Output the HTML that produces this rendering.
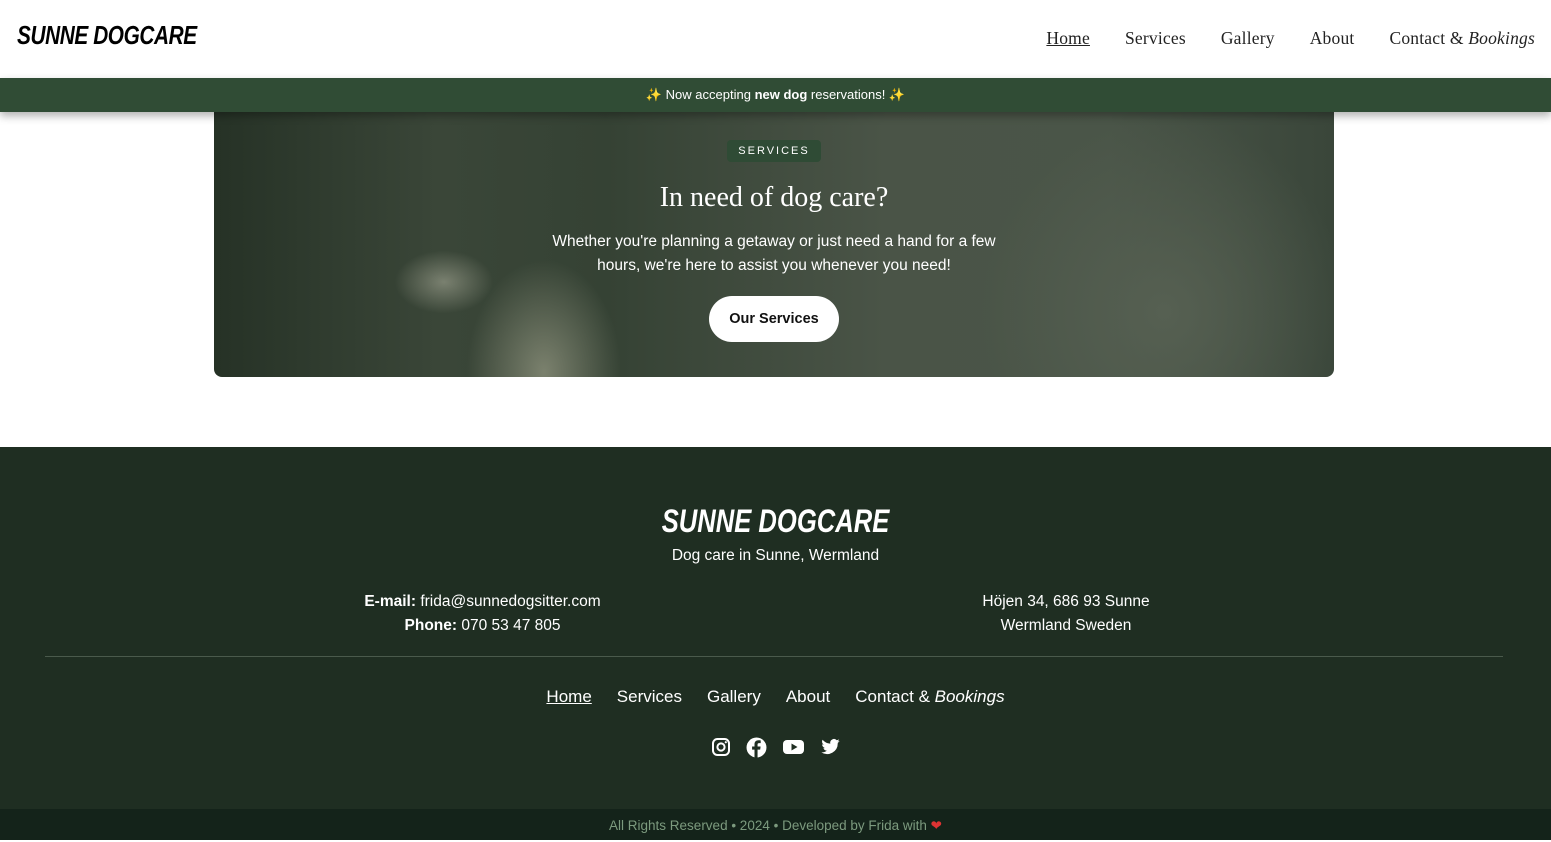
<!DOCTYPE html>
<html><head><meta charset="utf-8"><style>
*{margin:0;padding:0;box-sizing:border-box}
body{width:1551px;height:840px;overflow:hidden;background:#fff;font-family:"Liberation Sans",sans-serif;position:relative}
.hdr{position:absolute;top:0;left:0;width:1551px;height:78px;background:#fff}
.logo{position:absolute;left:17px;top:20px;font-size:26px;font-weight:900;font-style:italic;letter-spacing:-0.5px;transform-origin:left top;transform:scaleX(0.8);color:#000;white-space:nowrap}
.nav{position:absolute;top:28px;right:16px;display:flex;gap:35px;font-family:"Liberation Serif",serif;font-size:17.5px;color:#222;letter-spacing:0.2px}
.nav a{color:#222;text-decoration:none}
.banner{position:absolute;top:78px;left:0;width:1551px;height:34px;background:#304c35;color:#fff;font-size:13px;text-align:center;line-height:34px;box-shadow:0 4px 8px rgba(0,0,0,.3);z-index:2}
.hero{position:absolute;left:214px;top:112px;width:1120px;height:265px;border-radius:0 0 8px 8px;overflow:hidden;
background:
radial-gradient(ellipse 110px 160px at 330px 260px,rgba(190,190,165,.5),transparent 70%),
radial-gradient(ellipse 70px 45px at 230px 170px,rgba(200,200,180,.45),transparent 70%),
radial-gradient(ellipse 260px 280px at 950px 200px,#566052,transparent 70%),
linear-gradient(90deg,#263226 0%,#3a4638 20%,#354234 35%,#4a5447 60%,#4a5548 80%,#3a463a 100%)}
.hero .c{position:absolute;left:0;top:0;width:100%;text-align:center;color:#fff}
.tag{display:inline-block;margin-top:28px;background:#2f4b35;padding:5px 11px;border-radius:4px;font-size:11px;letter-spacing:2px}
h1{font-family:"Liberation Serif",serif;font-weight:normal;font-size:28px;margin-top:20px}
.p{font-size:15.5px;line-height:24px;margin-top:16px}
.btn{display:inline-block;margin-top:18px;background:#fff;color:#111;font-weight:bold;font-size:14.5px;padding:15px 20px;border-radius:23px}
.ft{position:absolute;top:447px;left:0;width:1551px;height:362px;background:#1f2e22;color:#fff}
.flogo{position:absolute;top:56px;left:0;width:100%;text-align:center;font-size:32px;font-weight:900;font-style:italic;transform:scaleX(0.8)}
.fsub{position:absolute;top:100px;width:100%;text-align:center;font-size:15.5px}
.ci{position:absolute;top:143px;font-size:15.5px;line-height:24px;text-align:center}
.hr{position:absolute;top:209px;left:45px;width:1458px;height:1px;background:#4a5a4c}
.fnav{position:absolute;top:240px;width:100%;display:flex;justify-content:center;gap:25px;font-size:17px}
.soc{position:absolute;top:290px;width:100%;display:flex;justify-content:center;gap:15px}
.bot{position:absolute;top:809px;left:0;width:1551px;height:31px;background:#14231a;color:#7c9a7e;font-size:13.5px;text-align:center;line-height:33px}
</style></head><body>
<div class="hdr"><div class="logo">SUNNE DOGCARE</div>
<div class="nav"><a style="text-decoration:underline">Home</a><a>Services</a><a>Gallery</a><a>About</a><a>Contact &amp; <i>Bookings</i></a></div></div>
<div class="banner">✨ Now accepting <b>new dog</b> reservations! ✨</div>
<div class="hero"><div class="c">
<div class="tag">SERVICES</div>
<h1>In need of dog care?</h1>
<div class="p">Whether you're planning a getaway or just need a hand for a few<br>hours, we're here to assist you whenever you need!</div>
<div class="btn">Our Services</div></div></div>
<div class="ft">
<div class="flogo">SUNNE DOGCARE</div>
<div class="fsub">Dog care in Sunne, Wermland</div>
<div class="ci" style="left:330px;width:305px"><b>E-mail:</b> frida@sunnedogsitter.com<br><b>Phone:</b> 070 53 47 805</div>
<div class="ci" style="left:930px;width:272px">Höjen 34, 686 93 Sunne<br>Wermland Sweden</div>
<div class="hr"></div>
<div class="fnav"><span style="text-decoration:underline">Home</span><span>Services</span><span>Gallery</span><span>About</span><span>Contact &amp; <i>Bookings</i></span></div>
<div class="soc">
<svg width="20" height="20" viewBox="0 0 20 20"><rect x="2" y="2" width="16" height="16" rx="4.5" fill="none" stroke="#fff" stroke-width="2"/><circle cx="10" cy="10" r="3.6" fill="none" stroke="#fff" stroke-width="2"/><circle cx="14.8" cy="5.2" r="1.1" fill="#fff"/></svg>
<svg width="21" height="21" viewBox="0 0 20 20"><circle cx="10" cy="10" r="9.5" fill="#fff"/><path d="M11 20V12h2.5l.4-3H11V7.3c0-.9.3-1.5 1.5-1.5H14V3.2c-.3 0-1.2-.1-2.2-.1-2.2 0-3.7 1.3-3.7 3.8V9H5.8v3h2.3v8z" fill="#1f2e22"/></svg>
<svg width="23" height="20" viewBox="0 0 23 20"><rect x="1" y="3" width="21" height="14" rx="4" fill="#fff"/><path d="M9.5 6.5v7l6-3.5z" fill="#1f2e22"/></svg>
<svg width="21" height="20" viewBox="0 0 24 24"><path fill="#fff" d="M23 4.6c-.8.4-1.7.6-2.6.7.9-.6 1.6-1.4 2-2.5-.9.5-1.900.9-2.9 1.1a4.5 4.5 0 0 0-7.7 4.1C8 7.8 4.7 6 2.5 3.3c-1.3 2.2-.4 4.6 1.4 6-.7 0-1.4-.2-2-.6 0 2.2 1.6 4.1 3.6 4.5-.7.2-1.4.2-2 .1.6 1.8 2.3 3.1 4.2 3.1A9 9 0 0 1 1 18.4 12.8 12.8 0 0 0 20.7 7.6V7c.9-.6 1.7-1.4 2.3-2.4z"/></svg>
</div></div>
<div class="bot">All Rights Reserved • 2024 • Developed by Frida with <span style="color:#d33">❤</span></div>
</body></html>
